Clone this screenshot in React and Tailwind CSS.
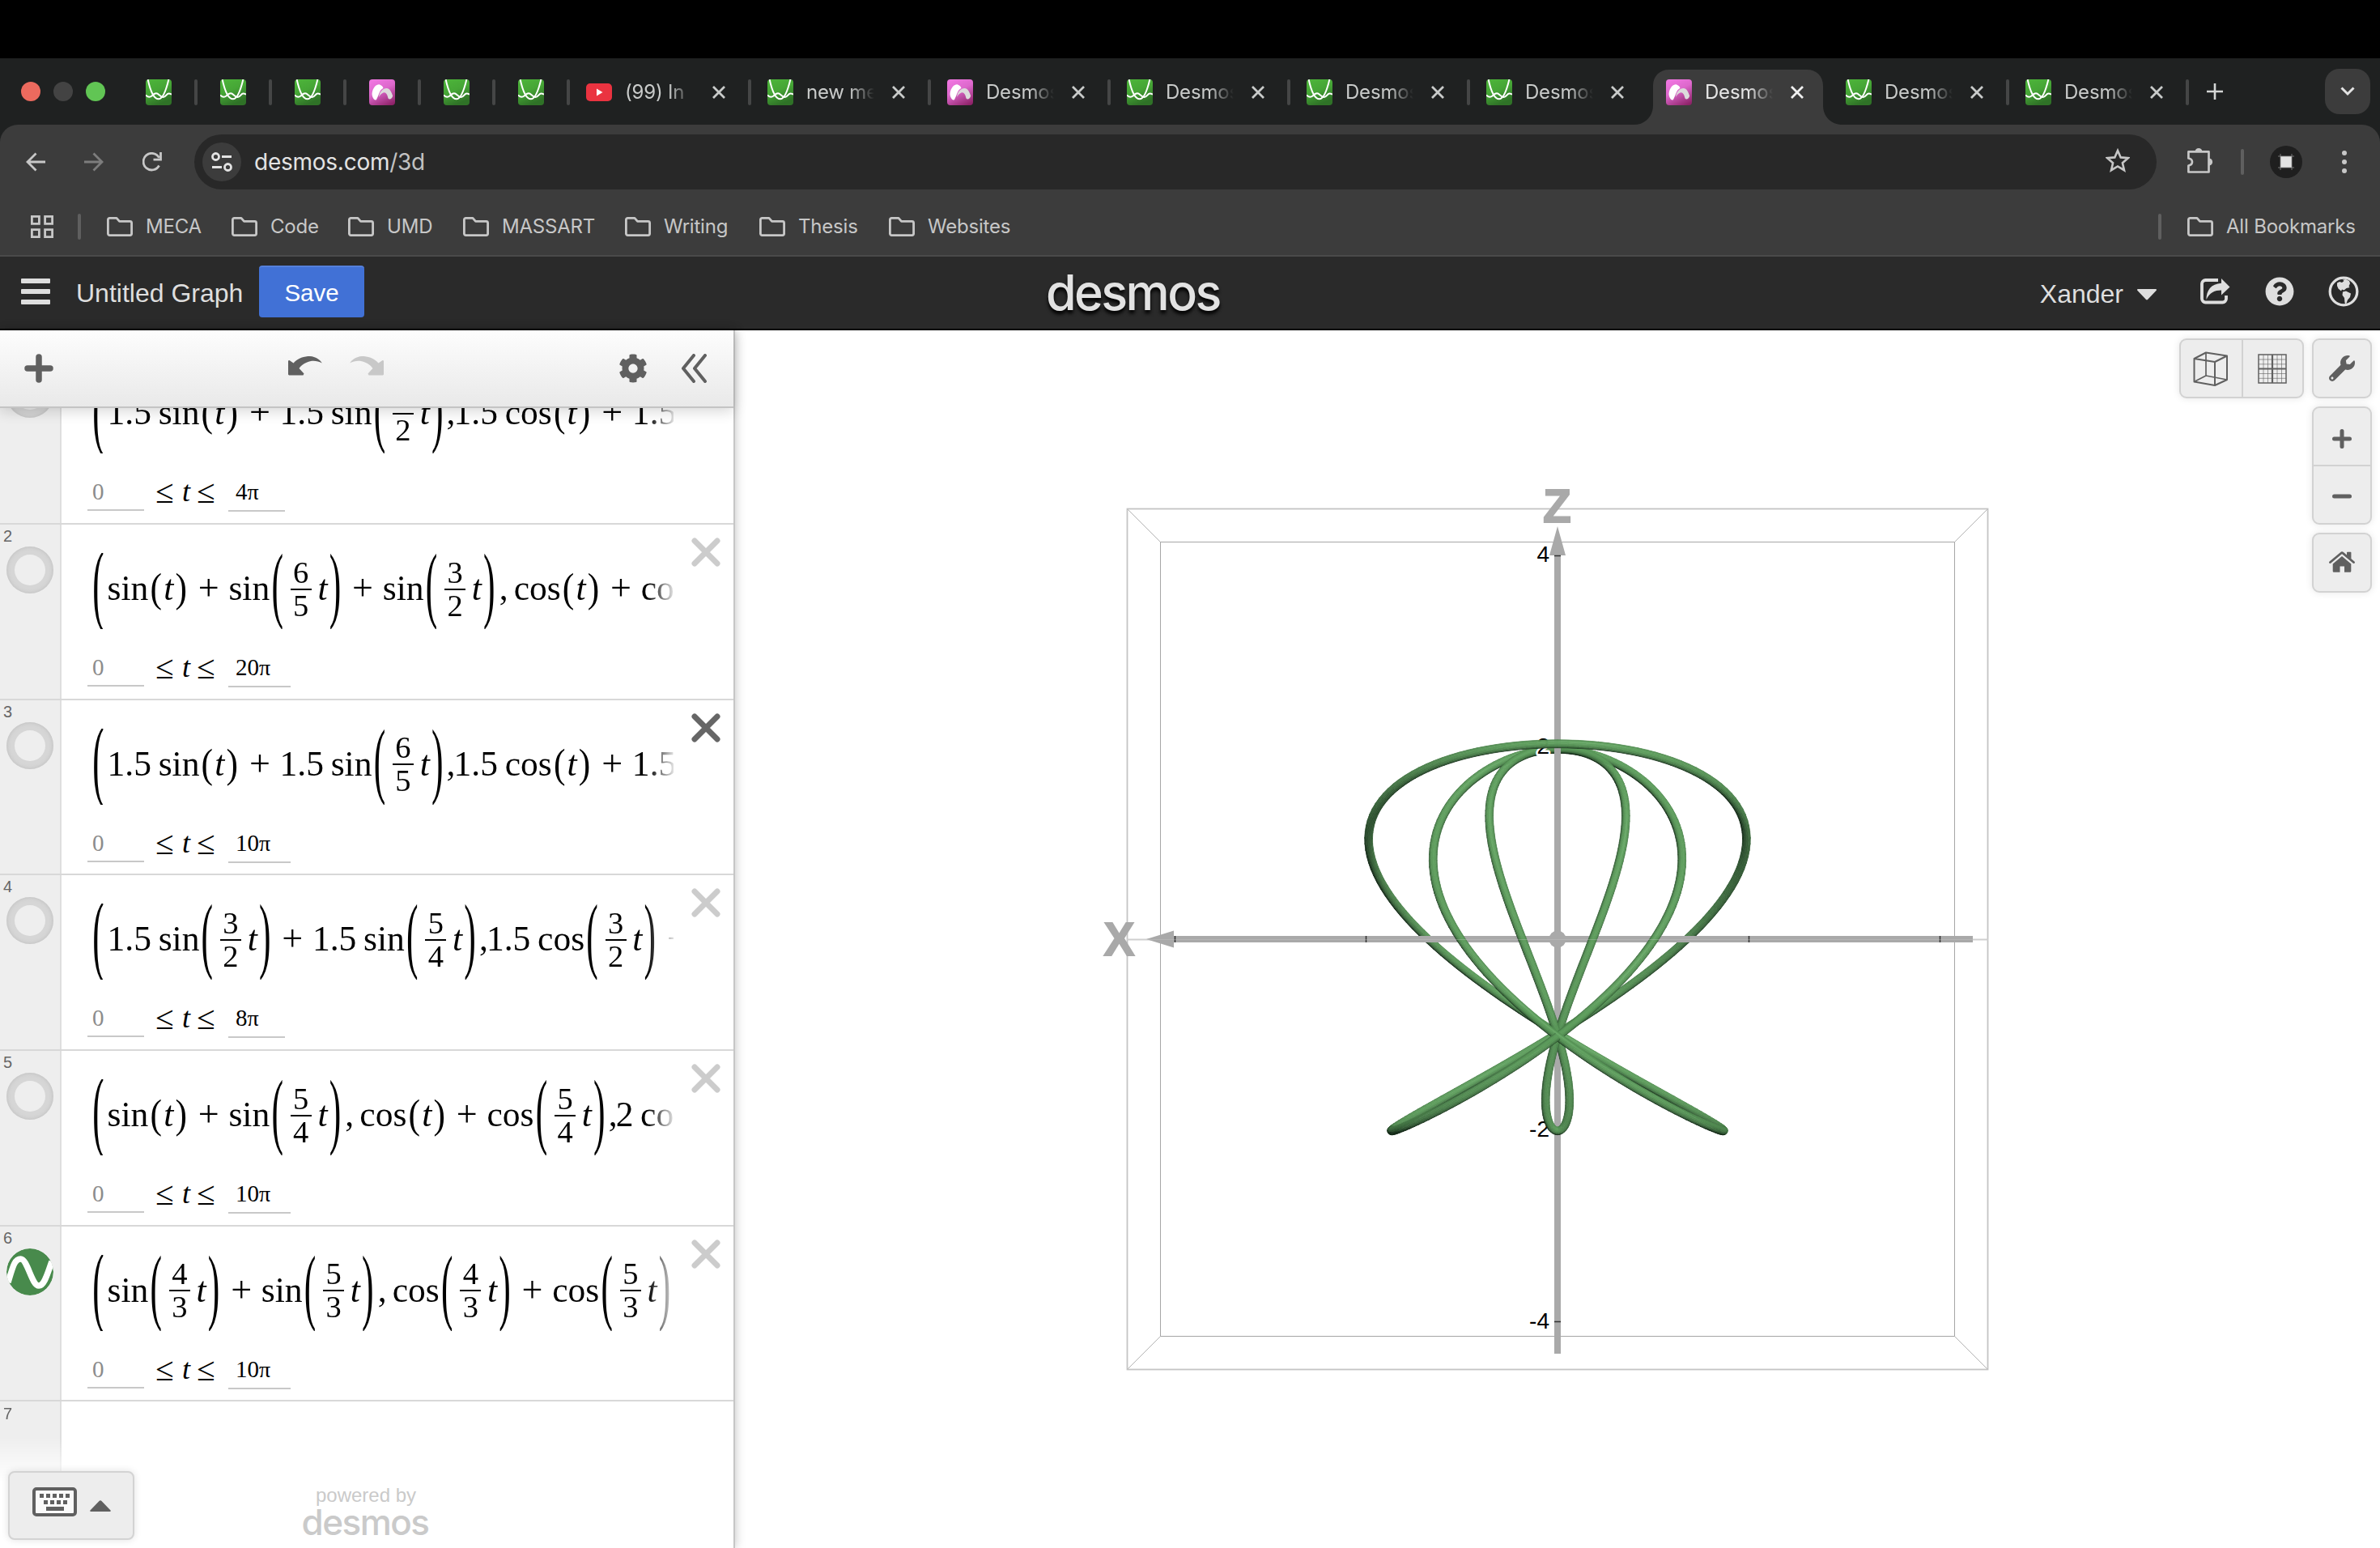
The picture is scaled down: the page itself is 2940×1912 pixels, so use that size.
import React from "react";
import { FaWrench, FaCog, FaQuestionCircle } from "react-icons/fa";

/* ---------- browser chrome ---------- */

function GreenIcon() {
  return (
    <svg viewBox="0 0 32 32" className="size-8 shrink-0 rounded-[4px]">
      <defs>
        <linearGradient id="gi" x1="0" y1="0" x2="0.4" y2="1">
          <stop offset="0" stopColor="#4db53a" />
          <stop offset="0.5" stopColor="#46a636" />
          <stop offset="1" stopColor="#2f7227" />
        </linearGradient>
      </defs>
      <rect width="32" height="32" fill="url(#gi)" />
      <g fill="none" stroke="#fff" strokeWidth="2">
        <path d="M2.6 0 C5 11 9 24.3 15.8 24.3 C22 24.3 26.500 8 28.400 0" />
        <path d="M0 19.500 C2 21.500 5 22.500 7.500 20.500 C9.500 18.500 11 17.300 13 17.300 C16 17.300 18 22 21.500 22 C25 22 25.500 17.500 28.500 17.500 C30 17.500 31 18 32 18.500" />
      </g>
    </svg>
  );
}

function PinkIcon() {
  return (
    <svg viewBox="0 0 32 32" className="size-8 shrink-0 rounded-[4px]">
      <defs>
        <linearGradient id="pi" x1="0.3" y1="0" x2="0.8" y2="1">
          <stop offset="0" stopColor="#ee75df" />
          <stop offset="0.4" stopColor="#dd68cc" />
          <stop offset="1" stopColor="#8e2369" />
        </linearGradient>
      </defs>
      <rect width="32" height="32" fill="url(#pi)" />
      <path d="M12 22 C13 15 17 11 21.500 11 C26 11 28 17 29.200 20.500 C28 24.500 25 25.500 23.500 23.500 C22.500 18.500 20.500 15.500 17.500 16.500 C15 17.300 13 20 12 22Z" fill="#dcdadb" />
      <path d="M3.600 17 C4.500 10 9 6 12.500 6.200 C15.500 7.300 17.200 9 17.400 11 C12.500 13 12 20 9 25 C6.500 27.500 3 21 3.600 17Z" fill="#fff" />
    </svg>
  );
}

function YouTubeIcon() {
  return (
    <svg viewBox="0 0 32 32" className="size-8 shrink-0">
      <rect y="5" width="32" height="22" rx="5" fill="#ea3340" />
      <path d="M13 11.500v9l7.500-4.500z" fill="#fff" />
    </svg>
  );
}

function Close({ className }) {
  return (
    <svg viewBox="0 0 16 16" className={className} fill="none" stroke="currentColor" strokeWidth="2.800">
      <path d="M1 1l14 14M15 1L1 15" />
    </svg>
  );
}

const Bar = ({ hidden }) => (
  <div className={hidden ? "h-8 w-1" : "h-8 w-1 rounded-full bg-[#454646]"} />
);

function Tab({ icon, title, active, first, noBar }) {
  return (
    <div className={(first ? "w-[224px]" : "w-[222px]") + " relative flex h-full shrink-0 items-center pt-0.5"}>
      {active && (
        <svg viewBox="0 0 258 68" className="absolute -left-10 bottom-0 h-[68px] w-[258px]">
          <path d="M0 68C14 68 24 58 24 44V20C24 8 32 0 44 0H214C226 0 234 8 234 20V44C234 58 244 68 258 68Z" fill="#3c3c3c" />
        </svg>
      )}
      <div className="relative flex items-center">
        {icon}
        <div className="ml-4 w-[88px] overflow-hidden whitespace-nowrap text-[24px] leading-8 tracking-[-0.2px] [mask-image:linear-gradient(to_right,#000_54px,transparent_84px)]">
          <span className={active ? "text-[#e6e6e6]" : "text-[#c9cbca]"}>{title}</span>
        </div>
        <Close className={(first ? "ml-5" : "ml-[18px]") + (active ? " text-[#f0f0f0]" : " text-[#c9cbca]") + " size-4"} />
        <div className="ml-7">
          <Bar hidden={noBar} />
        </div>
      </div>
    </div>
  );
}

const pinned = ["g", "g", "g", "p", "g", "g"];
const tabs = [
  { k: "y", title: "(99) In" },
  { k: "g", title: "new me" },
  { k: "p", title: "Desmos" },
  { k: "g", title: "Desmos" },
  { k: "g", title: "Desmos" },
  { k: "g", title: "Desmos", noBar: true },
  { k: "p", title: "Desmos", active: true, noBar: true },
  { k: "g", title: "Desmos" },
  { k: "g", title: "Desmos" },
];
const iconFor = (k) => (k === "g" ? <GreenIcon /> : k === "p" ? <PinkIcon /> : <YouTubeIcon />);

function TabStrip() {
  return (
    <div className="flex h-[82px] items-center bg-[#1f2121] pl-[26px]">
      <div className="flex w-[154px] gap-4">
        <div className="size-6 rounded-full bg-[#ec6a5e]" />
        <div className="size-6 rounded-full bg-[#434343]" />
        <div className="size-6 rounded-full bg-[#61c554]" />
      </div>
      <div className="flex w-[544px] shrink-0 pt-0.5">
        {pinned.map((k, i) => (
          <div key={i} className="flex w-[92px] shrink-0 items-center gap-7">
            {iconFor(k)}
            <Bar />
          </div>
        ))}
      </div>
      {tabs.map((t, i) => (
        <Tab key={i} icon={iconFor(t.k)} title={t.title} active={t.active} noBar={t.noBar} first={i === 0} />
      ))}
      <svg viewBox="0 0 20 20" className="ml-[2px] size-5 shrink-0 text-[#d4d6d5]" stroke="currentColor" strokeWidth="2.600">
        <path d="M10 0v20M0 10h20" />
      </svg>
      <div className="mr-3 ml-auto flex size-14 items-center justify-center rounded-[18px] bg-[#3c3c3c]">
        <svg viewBox="0 0 18 12" className="h-3 w-[18px]" fill="none" stroke="#e3e3e3" strokeWidth="3">
          <path d="M1.500 1.500L9 9l7.500-7.500" />
        </svg>
      </div>
    </div>
  );
}

function Toolbar() {
  return (
    <div className="flex h-[92px] items-center rounded-t-[22px] bg-[#3c3c3c] pl-8">
      <svg viewBox="0 0 24 24" className="size-6" fill="none" stroke="#c7c7c7" strokeWidth="2.800">
        <path d="M24 12H2M12.500 1.500L2 12l10.500 10.500" />
      </svg>
      <svg viewBox="0 0 24 24" className="ml-12 size-6" fill="none" stroke="#7d7d7d" strokeWidth="2.800">
        <path d="M0 12H22M11.500 1.500L22 12L11.500 22.500" />
      </svg>
      <svg viewBox="0 0 24 24" className="ml-12 size-6" fill="none" stroke="#c7c7c7" strokeWidth="2.800">
        <path d="M20.500 16.500A10.300 10.300 0 1 1 20.500 6.800M22.500 0v9.200h-9" />
      </svg>
      <div className="ml-10 flex h-[68px] w-[2424px] items-center rounded-full bg-[#282828] pl-2.5">
        <div className="flex size-12 items-center justify-center rounded-full bg-[#3c3c3c]">
          <svg viewBox="0 0 26 24" className="h-6 w-[26px]" fill="none" stroke="#e3e3e3" strokeWidth="2.800">
            <circle cx="5.500" cy="5.500" r="4" />
            <path d="M13 5.500h12M1 18.500h12" />
            <circle cx="20.500" cy="18.500" r="4" />
          </svg>
        </div>
        <div className="ml-4 text-[28px] leading-9 tracking-[-0.25px] text-[#e3e3e3]">
          desmos.com<span className="text-[#c2c2c2]">/3d</span>
        </div>
        <svg viewBox="0 0 30 30" className="mr-[33px] mb-1 ml-auto size-[30px]" fill="none" stroke="#c7c7c7" strokeWidth="2.600">
          <path d="M15 3l3.700 8.400 9.100.8-6.900 6 2.100 9-8-4.800-8 4.800 2.100-9-6.900-6 9.100-.8z" />
        </svg>
      </div>
      <svg viewBox="0 0 32 32" className="mb-1 ml-[38px] size-8" fill="none" stroke="#c7c7c7" strokeWidth="2.700">
        <path d="M3.500 5.400H26.500V30.500H1.400V22.500C7.500 21.500 7.500 14.500 1.400 13.500V5.400Z" strokeLinejoin="round" />
        <path d="M9.500 5C10 -0.500 18 -0.500 18.500 5ZM27 13.500C32.500 14 32.500 22 27 22.500Z" fill="#c7c7c7" stroke="none" />
      </svg>
      <div className="ml-[34px] h-8 w-1 rounded-full bg-[#5f5f5f]" />
      <div className="ml-8 flex size-10 items-center justify-center rounded-full bg-[#1f1f1f]">
        <svg viewBox="0 0 20 20" className="size-5">
          <rect x="3" y="3" width="14" height="14" fill="#e3e3e3" />
          <path d="M3 0v20M17 0v20M0 3h20M0 17h20" stroke="#8c8c8c" strokeWidth="0.800" />
        </svg>
      </div>
      <div className="ml-[49px] flex flex-col gap-[5px]">
        <div className="size-1.5 rounded-full bg-[#c7c7c7]" />
        <div className="size-1.5 rounded-full bg-[#c7c7c7]" />
        <div className="size-1.5 rounded-full bg-[#c7c7c7]" />
      </div>
    </div>
  );
}

const Folder = () => (
  <svg viewBox="0 0 32 24" className="h-6 w-8 shrink-0" fill="none" stroke="#c7c7c7" strokeWidth="2.800" strokeLinejoin="round">
    <path d="M1.400 3.500a2 2 0 0 1 2-2.100H12l3.500 4H28.600a2 2 0 0 1 2 2V20.600a2 2 0 0 1-2 2H3.400a2 2 0 0 1-2-2z" />
  </svg>
);

const bookmarks = [
  ["MECA", "w-[154px]"],
  ["Code", "w-[144px]"],
  ["UMD", "w-[142px]"],
  ["MASSART", "w-[200px]"],
  ["Writing", "w-[166px]"],
  ["Thesis", "w-[160px]"],
  ["Websites", "w-[160px]"],
];

function Bookmarks() {
  return (
    <div className="flex h-[71px] items-center border-b-2 border-[#4a4a4a] bg-[#3c3c3c] pb-px pl-[38px] text-[24px] tracking-[-0.2px] text-[#c7c7c7]">
      <svg viewBox="0 0 28 28" className="size-7" fill="none" stroke="#c7c7c7" strokeWidth="2.800">
        <path d="M1.400 1.400h9v9h-9zM17.600 1.400h9v9h-9zM1.400 17.600h9v9h-9zM17.600 17.600h9v9h-9z" />
      </svg>
      <div className="mr-8 ml-[30px] h-8 w-1 rounded-full bg-[#5f5f5f]" />
      {bookmarks.map(([name, w]) => (
        <div key={name} className={w + " flex shrink-0 items-center gap-4"}>
          <Folder />
          {name}
        </div>
      ))}
      <div className="ml-auto h-8 w-1 rounded-full bg-[#5f5f5f]" />
      <div className="mr-[30px] ml-8 flex w-[208px] items-center gap-4 whitespace-nowrap">
        <Folder />
        All Bookmarks
      </div>
    </div>
  );
}

function Header() {
  return (
    <div className="flex h-[91px] items-center border-b-2 border-black bg-[#2a2a2a] pb-[3px] pl-[26px] font-['Liberation_Sans',Arial,sans-serif] text-[32px] text-[#dedede]">
      <div className="flex w-9 flex-col gap-[7px]">
        <div className="h-1.5 rounded-[1px] bg-[#dedede]" />
        <div className="h-1.5 rounded-[1px] bg-[#dedede]" />
        <div className="h-1.5 rounded-[1px] bg-[#dedede]" />
      </div>
      <div className="ml-8 w-[226px] pt-1 whitespace-nowrap">Untitled Graph</div>
      <div className="flex h-16 w-[130px] items-center justify-center rounded-[4px] border-t-2 border-[#5580da] bg-[#4171d6] pt-0.5 text-[29.500px] text-white">Save</div>
      <div className="ml-[842px] w-[229px] pt-0.5 font-['Inter',sans-serif] text-[61px] leading-[62px] font-medium tracking-[-2.600px] text-[#e2e2e2] [text-shadow:0_4px_4px_#000]">desmos</div>
      <div className="ml-auto flex items-center">
        <span className="pt-1.5">Xander</span>
        <svg viewBox="0 0 24 14" className="mt-2 ml-[17px] h-3.5 w-6" fill="#dedede">
          <path d="M1 0H23a1 1 0 0 1 .7 1.700L13 13a1.500 1.500 0 0 1-2 0L.3 1.700A1 1 0 0 1 1 0z" />
        </svg>
        <svg viewBox="0 0 36 32" className="ml-[54px] h-8 w-9 overflow-visible">
          <path d="M22 2H6.500A4.500 4.500 0 0 0 2 6.500V25a4.500 4.500 0 0 0 4.500 4.500H27.500A4.500 4.500 0 0 0 32 25V21" fill="none" stroke="#dedede" strokeWidth="3.800" />
          <path d="M26 0L36.500 10.500L26 20.500V14.500C18 14.500 11.500 17 7.500 26C7.500 15 13 6.500 26 5.700Z" fill="#dedede" />
        </svg>
        <FaQuestionCircle className="ml-11 size-9" />
        <svg viewBox="0 0 38 38" className="mr-[26px] ml-[42px] size-[38px]">
          <circle cx="19" cy="19" r="16.800" fill="none" stroke="#dedede" strokeWidth="3.300" />
          <path d="M11 8.500L14 7L17 8L19.500 6L18 4.500L22 4L26 6L27 9L25.500 12.500L26.500 14L22.500 15L19.500 17.500L17 16.500L16 18.500L12.500 15.500L11 12ZM18 19.500L22 18.500L28 21.500L27 26L24 29.500L22 35L20.500 33L20 27L17.500 23.500Z" fill="#dedede" />
        </svg>
      </div>
    </div>
  );
}

/* ---------- expression list ---------- */

const Txt = ({ children, className = "" }) => (
  <span className={className + " mb-2 shrink-0 whitespace-pre leading-[44px]"}>{children}</span>
);
const Fn = ({ n }) => <Txt>{n}</Txt>;
const Num = ({ n }) => <Txt className="mr-[8.700px]">{n}</Txt>;
const T = () => <Txt className="italic">t</Txt>;
const Plus = () => <Txt className="w-[49.400px] text-center text-[46px]">+</Txt>;
const Comma = ({ wide }) => <Txt className={wide ? "w-[21px] pl-[3px]" : "w-[11px] pl-[2px]"}>,</Txt>;

function Paren({ c, size }) {
  const s = size === "s" ? "scale-y-[1.160] w-[18.800px]" : size === "m" ? "scale-y-[2.360] w-[18.800px]" : "scale-y-[2.560] w-[20.500px] pr-[1.500px]";
  return (
    <span className={s + " mb-2 h-[44px] shrink-0 origin-[50%_26px] text-center leading-[44px]"}>{c}</span>
  );
}

function Frac({ a, b }) {
  return (
    <span className="mr-[7.700px] ml-[6.700px] flex w-[26px] shrink-0 flex-col items-center pb-[7px] text-[38.500px]">
      <span className="leading-[40px]">{a}</span>
      <span className="h-[2px] w-full bg-black" />
      <span className="leading-[38px]">{b}</span>
    </span>
  );
}

const Small = () => (
  <>
    <Paren c="(" size="s" />
    <T />
    <Paren c=")" size="s" />
  </>
);
const Big = ({ a, b }) => (
  <>
    <Paren c="(" size="m" />
    <Frac a={a} b={b} />
    <T />
    <Paren c=")" size="m" />
  </>
);

const exprs = [
  {
    n: "1", to: "4π",
    e: <><Num n="1.5" /><Fn n="sin" /><Small /><Plus /><Num n="1.5" /><Fn n="sin" /><Big a="3" b="2" /><Comma /><Num n="1.5" /><Fn n="cos" /><Small /><Plus /><Num n="1.5" /></>,
  },
  {
    n: "2", to: "20π",
    e: <><Fn n="sin" /><Small /><Plus /><Fn n="sin" /><Big a="6" b="5" /><Plus /><Fn n="sin" /><Big a="3" b="2" /><Comma wide /><Fn n="cos" /><Small /><Plus /><Fn n="co" /></>,
  },
  {
    n: "3", to: "10π", hot: true,
    e: <><Num n="1.5" /><Fn n="sin" /><Small /><Plus /><Num n="1.5" /><Fn n="sin" /><Big a="6" b="5" /><Comma /><Num n="1.5" /><Fn n="cos" /><Small /><Plus /><Num n="1.5" /></>,
  },
  {
    n: "4", to: "8π",
    e: <><Num n="1.5" /><Fn n="sin" /><Big a="3" b="2" /><Plus /><Num n="1.5" /><Fn n="sin" /><Big a="5" b="4" /><Comma /><Num n="1.5" /><Fn n="cos" /><Big a="3" b="2" /><Plus /></>,
  },
  {
    n: "5", to: "10π",
    e: <><Fn n="sin" /><Small /><Plus /><Fn n="sin" /><Big a="5" b="4" /><Comma wide /><Fn n="cos" /><Small /><Plus /><Fn n="cos" /><Big a="5" b="4" /><Comma /><Num n="2" /><Fn n="co" /></>,
  },
  {
    n: "6", to: "10π", on: true,
    e: <><Fn n="sin" /><Big a="4" b="3" /><Plus /><Fn n="sin" /><Big a="5" b="3" /><Comma wide /><Fn n="cos" /><Big a="4" b="3" /><Plus /><Fn n="cos" /><Big a="5" b="3" /></>,
  },
];

function Row({ n, to, e, hot, on }) {
  return (
    <div className="flex h-[216.700px] shrink-0 border-b-2 border-[#d8d8d8]">
      <div className="w-[76px] shrink-0 border-r-2 border-[#dedede] bg-[#eeeeee]">
        <div className="h-[27px] pt-[2px] pl-1 font-['Liberation_Sans',Arial,sans-serif] text-[20px] leading-6 text-[#666]">{n}</div>
        {on ? (
          <svg viewBox="0 0 58 58" className="ml-2 size-[58px] rounded-full">
            <circle cx="29" cy="29" r="29" fill="#488a4c" />
            <path d="M2 42C8 22 10 13 17.500 13C26 13 31 46 40 46C47 46 51 30 56 16" fill="none" stroke="#fff" strokeWidth="7.500" />
          </svg>
        ) : (
          <div className="ml-2 size-[58px] rounded-full bg-[#d6d6d6] p-[10px] shadow-[inset_0_0_5px_#bcbcbc]">
            <div className="size-full rounded-full bg-[#eeeeee]" />
          </div>
        )}
      </div>
      <div className="flex w-[756px] flex-col pt-[35px]">
        <div className="ml-9 flex h-[94px] w-[720px] items-center overflow-hidden font-['Liberation_Serif','Times_New_Roman',serif] text-[43.560px] text-black [mask-image:linear-gradient(to_right,#000_688px,transparent_724px)]">
          <Paren c="(" size="l" />
          {e}
        </div>
        <div className="mt-[31px] ml-8 flex font-['Liberation_Serif','Times_New_Roman',serif] text-[29px] leading-[32px] text-black">
          <div className="h-10 w-[70px] border-b-2 border-[#c8c8c8] pl-1.5 text-[#8c8c8c]">0</div>
          <div className="flex w-[104px] pl-[14px] text-[41px] leading-[33px]">
            <span className="w-[33px]">≤</span>
            <span className="w-[18px] text-[36px] italic">t</span>
            <span>≤</span>
          </div>
          <div className="h-[41px] min-w-[70px] border-b-2 border-[#c8c8c8] pr-[25px] pl-[9px]">
            {to.slice(0, -1)}
            <span className="text-[28px]">π</span>
          </div>
        </div>
      </div>
      <div className="pt-4 pl-[22px]">
        <svg viewBox="0 0 36 36" className={(hot ? "text-[#666]" : "text-[#ccc]") + " size-9"} stroke="currentColor" strokeWidth="7" strokeLinecap="round">
          <path d="M4 4l28 28M32 4L4 32" />
        </svg>
      </div>
    </div>
  );
}

function Panel() {
  return (
    <div className="relative z-10 flex h-full w-[908px] shrink-0 flex-col border-r-2 border-[#c6c6c6] bg-white shadow-[0_0_12px_rgba(0,0,0,0.250)]">
      <div className="z-10 flex h-24 shrink-0 items-center border-b-2 border-[#c4c4c4] bg-linear-to-b from-[#fdfdfd] to-[#e9e9e9] pl-[30px] shadow-[0_4px_16px_rgba(0,0,0,0.160)]">
        <svg viewBox="0 0 36 36" className="size-9" stroke="#606060" strokeWidth="7.500" strokeLinecap="round">
          <path d="M18 4v28M4 18h28" />
        </svg>
        <svg viewBox="0 0 42 24" className="mb-1.5 ml-[290px] h-6 w-[42px]" fill="#606060">
          <path d="M0 22.500V5.500L1.500 5L6.500 8.500C12 2 20 0 27 0C34 0.500 39 4 41.800 8.500C37 5.800 32 5.300 27 6.200C20 8 15 12 13.500 15L19.500 21.500L18.500 23.500H1Z" />
        </svg>
        <svg viewBox="0 0 42 24" className="mb-1.5 ml-[34px] h-6 w-[42px] -scale-x-100" fill="#c8c8c8">
          <path d="M0 22.500V5.500L1.500 5L6.500 8.500C12 2 20 0 27 0C34 0.500 39 4 41.800 8.500C37 5.800 32 5.300 27 6.200C20 8 15 12 13.500 15L19.500 21.500L18.500 23.500H1Z" />
        </svg>
        <FaCog className="ml-[290px] size-9 text-[#606060]" />
        <svg viewBox="0 0 34 36" className="ml-[41px] h-9 w-[34px]" fill="none" stroke="#606060" strokeWidth="4" strokeLinecap="round" strokeLinejoin="round">
          <path d="M16 2L3 18l13 16M30 2L17 18l13 16" />
        </svg>
      </div>
      <div className="relative flex flex-1 flex-col overflow-hidden">
        <div className="-mt-[72.700px] flex flex-1 flex-col">
          {exprs.map((x) => (
            <Row key={x.n} {...x} />
          ))}
          <div className="flex flex-1">
            <div className="w-[76px] border-r-2 border-[#dedede] bg-[#eeeeee] pt-[3px] pl-1 font-['Liberation_Sans',Arial,sans-serif] text-[20px] leading-6 text-[#666] [mask-image:linear-gradient(#000_44px,transparent_100px)]">7</div>
          </div>
        </div>
        <div className="absolute bottom-[10px] left-[10px] flex h-[85px] w-[156px] items-center rounded-lg border-2 border-[#d3d3d3] bg-[#ededed] pl-7 shadow-[0_0_10px_rgba(0,0,0,0.120)]">
          <svg viewBox="0 0 55 36" className="mb-2.5 h-9 w-[55px]">
            <rect x="2" y="2" width="51" height="32" rx="3" fill="#fafafa" stroke="#606060" strokeWidth="4" />
            <path d="M9 10.500h5M17 10.500h5M25 10.500h5M33 10.500h5M41 10.500h5M14 18.500h5M22 18.500h5M30 18.500h5M38 18.500h5" stroke="#606060" strokeWidth="5" />
            <path d="M17 26.500h22" stroke="#606060" strokeWidth="5" />
          </svg>
          <svg viewBox="0 0 26 14" className="ml-4 h-3.5 w-[26px]" fill="#606060">
            <path d="M1.500 14h23a1 1 0 0 0 .8-1.800L14.500 1a2 2 0 0 0-3 0L.7 12.200A1 1 0 0 0 1.500 14z" />
          </svg>
        </div>
        <div className="absolute bottom-[10px] left-[371px] flex w-[160px] flex-col items-center text-[#cacaca]">
          <span className="pl-0.5 font-['Liberation_Sans',Arial,sans-serif] text-[24px] leading-[22px]">powered by</span>
          <span className="font-['Inter',sans-serif] text-[44px] leading-[44px] font-medium tracking-[-1.500px]">desmos</span>
        </div>
      </div>
    </div>
  );
}

/* ---------- 3D scene ---------- */

const CX = 1016;
const CY = 752;
const UNIT = 118.4;
const CAM = 108.6;
const RAD = 0.041;

const point = (t) => {
  const r = 2 * Math.cos(t / 6);
  return [r * Math.sin(1.5 * t), r * Math.cos(1.5 * t), 2 * Math.cos(t)];
};
const project = ([x, y, z]) => {
  const s = UNIT / (1 - y / CAM);
  return [CX - x * s, CY - z * s];
};
const norm = (v) => {
  const l = Math.hypot(v[0], v[1], v[2]) || 1;
  return [v[0] / l, v[1] / l, v[2] / l];
};
const cross = (a, b) => [a[1] * b[2] - a[2] * b[1], a[2] * b[0] - a[0] * b[2], a[0] * b[1] - a[1] * b[0]];
const LIGHT = norm([-0.22, 0.85, 0.48]);
const DARK = [20, 42, 24];
const LIT = [94, 157, 93];

function buildTube() {
  const N = 540;
  const M = 8;
  const rings = [];
  for (let i = 0; i <= N; i++) {
    const t = (i / N) * 6 * Math.PI;
    const p = point(t);
    const a = point(t - 0.001);
    const b = point(t + 0.001);
    const tan = norm([b[0] - a[0], b[1] - a[1], b[2] - a[2]]);
    const side = norm(cross(tan, [0, 1, 0]));
    const face = norm(cross(side, tan));
    const pts = [];
    for (let j = 0; j <= M; j++) {
      const f = (j / M - 0.5) * Math.PI;
      const o = [0, 1, 2].map((k) => Math.sin(f) * side[k] + Math.cos(f) * face[k]);
      pts.push(project([0, 1, 2].map((k) => p[k] + RAD * o[k])));
    }
    rings.push({ p, side, face, pts });
  }
  const segs = [];
  for (let i = 0; i < N; i++) {
    const A = rings[i];
    const B = rings[i + 1];
    const quads = [];
    for (let j = 0; j < M; j++) {
      const f = ((j + 0.5) / M - 0.5) * Math.PI;
      const n = [0, 1, 2].map((k) => Math.sin(f) * A.side[k] + Math.cos(f) * A.face[k]);
      const dot = n[0] * LIGHT[0] + n[1] * LIGHT[1] + n[2] * LIGHT[2];
      const d = Math.pow(Math.min(1, Math.max(0, (dot + 0.22) / 1.12)), 0.62);
      const spec = Math.pow(Math.max(0, dot), 40) * 14;
      const c = [0, 1, 2].map((k) => Math.round(DARK[k] + (LIT[k] - DARK[k]) * d + spec));
      const q = [A.pts[j], A.pts[j + 1], B.pts[j + 1], B.pts[j]];
      quads.push({ c: `rgb(${c.join(",")})`, pts: q.map((v) => v[0].toFixed(1) + "," + v[1].toFixed(1)).join(" ") });
    }
    segs.push({ y: (A.p[1] + B.p[1]) / 2, quads });
  }
  return segs.sort((a, b) => a.y - b.y);
}

const tube = buildTube();
const back = tube.filter((s) => s.y < 0);
const front = tube.filter((s) => s.y >= 0);

const Tube = ({ segs }) => (
  <g strokeWidth="0.600" strokeLinejoin="round">
    {segs.map((s, i) => (
      <g key={i}>
        {s.quads.map((q, j) => (
          <polygon key={j} points={q.pts} fill={q.c} stroke={q.c} />
        ))}
      </g>
    ))}
  </g>
);

function Scene() {
  return (
    <svg viewBox="0 0 2032 1504" className="h-[1504px] w-[2032px]">
      <g fill="none" stroke="#a6a6a6" strokeWidth="1">
        <rect x="525.500" y="261.500" width="981" height="981" />
        <path d="M484.500 220.500L525.500 261.500M1547.500 220.500L1506.500 261.500M484.500 1283.500L525.500 1242.500M1547.500 1283.500L1506.500 1242.500" stroke="#b4b4b4" />
      </g>
      <rect x="484.500" y="220.500" width="1063" height="1063" fill="none" stroke="#c4c4c4" strokeWidth="1.800" />
      <path d="M484 752.500H1548" stroke="#cfcfcf" strokeWidth="2" />
      <Tube segs={back} />
      <g fill="#a9a9a9">
        <rect x="1012" y="276" width="8" height="988" />
        <rect x="540" y="748" width="989" height="8" />
        <path d="M1016 242l10 36h-20zM508 752l34-10.500v21z" />
        <circle cx="1016" cy="752" r="10.500" />
      </g>
      <path d="M543.500 748v8M779.500 748v8M1252.500 748v8M1488.500 748v8M1012 278.500h8M1012 1224.500h8" stroke="#333" strokeWidth="1.500" />
      <g fontFamily="Liberation Sans, Arial, sans-serif" fontWeight="700" fontSize="57" fill="#a9a9a9" stroke="#a9a9a9" strokeWidth="1.800" textAnchor="middle">
        <text x="1015.500" y="236.500">Z</text>
        <text x="474.500" y="772">X</text>
      </g>
      <g fontFamily="Liberation Sans, Arial, sans-serif" fontSize="28" fill="#000" stroke="#fff" strokeWidth="5" paintOrder="stroke" strokeLinejoin="round" textAnchor="end">
        <text x="1006" y="286">4</text>
        <text x="1006" y="523">2</text>
        <text x="1006" y="996">-2</text>
        <text x="1006" y="1233">-4</text>
      </g>
      <Tube segs={front} />
      <path d="M484 752.500H1548" stroke="#d0d0d0" strokeWidth="1.200" opacity="0.300" />
    </svg>
  );
}

const box = "border-2 border-[#d2d2d2] bg-[#ededed] rounded-[9px] shadow-[0_0_10px_rgba(0,0,0,0.100)] text-[#606060]";

function GraphButtons() {
  return (
    <div className="absolute top-[10px] right-[10px] flex items-start gap-2.5">
      <div className={box + " flex h-[74px] w-[154px]"}>
        <div className="flex w-[77px] items-center justify-center border-r-2 border-[#d2d2d2]">
          <svg viewBox="0 0 43 43" className="mr-0.5 size-[43px]" fill="none" stroke="#606060" strokeWidth="2" strokeLinejoin="round">
            <path d="M16 1.500V30L42 35M16 30L1.500 37.500" strokeWidth="1.700" />
            <path d="M1.500 9L16 1.500L42 5.500V35L27 42L1.500 37.500ZM1.500 9L27 13L42 5.500M27 13V42" />
          </svg>
        </div>
        <div className="flex flex-1 items-center justify-center">
          <svg viewBox="0 0 36 37" className="mr-0.5 h-[37px] w-9" fill="none" stroke="#606060">
            <path d="M7 1v35M12.500 1v35M24 1v35M29.500 1v35M1 7h34M1 12.800h34M1 24.500h34M1 30.300h34" strokeWidth="0.600" />
            <path d="M1 1h34v35H1z" strokeWidth="1.500" />
            <path d="M18 1v35M1 18.500h34" strokeWidth="2.200" />
          </svg>
        </div>
      </div>
      <div className="flex flex-col gap-2.5">
        <div className={box + " flex size-[74px] items-center justify-center"}>
          <FaWrench className="size-8" />
        </div>
        <div className={box + " flex h-[146px] w-[74px] flex-col"}>
          <div className="flex h-[72px] items-center justify-center border-b-2 border-[#d2d2d2] pt-1.5">
            <svg viewBox="0 0 24 24" className="size-6" stroke="currentColor" strokeWidth="5" strokeLinecap="round">
              <path d="M12 2.500v19M2.500 12h19" />
            </svg>
          </div>
          <div className="flex flex-1 items-center justify-center pt-[3px]">
            <svg viewBox="0 0 24 24" className="size-6" stroke="currentColor" strokeWidth="5" strokeLinecap="round">
              <path d="M2.500 12h19" />
            </svg>
          </div>
        </div>
        <div className={box + " flex size-[74px] items-center justify-center"}>
          <svg viewBox="0 0 32 27" className="mb-0.5 h-[27px] w-8" fill="currentColor">
            <path d="M1.500 13.500L15 2.200a1.600 1.600 0 0 1 2 0L30.500 13.500" fill="none" stroke="currentColor" strokeWidth="2.800" strokeLinecap="round" />
            <path d="M22 1.500a.8.800 0 0 1 .8-.8h3.800a.8.800 0 0 1 .8.800V9.500L22 5Z" />
            <path d="M16 6L27.300 15.500V24.500a1.300 1.300 0 0 1-1.300 1.300H19V18.500H13.500V25.800H6a1.300 1.300 0 0 1-1.300-1.300V15.500Z" />
          </svg>
        </div>
      </div>
    </div>
  );
}

export default function App() {
  return (
    <div className="flex h-[1912px] w-[2940px] flex-col overflow-hidden bg-white font-['Inter',sans-serif]">
      <div className="h-[72px] shrink-0 bg-black" />
      <div className="bg-[#1f2121]">
        <TabStrip />
        <Toolbar />
        <Bookmarks />
      </div>
      <Header />
      <div className="flex h-[1504px]">
        <Panel />
        <div className="relative flex-1 overflow-hidden">
          <Scene />
          <GraphButtons />
        </div>
      </div>
    </div>
  );
}
